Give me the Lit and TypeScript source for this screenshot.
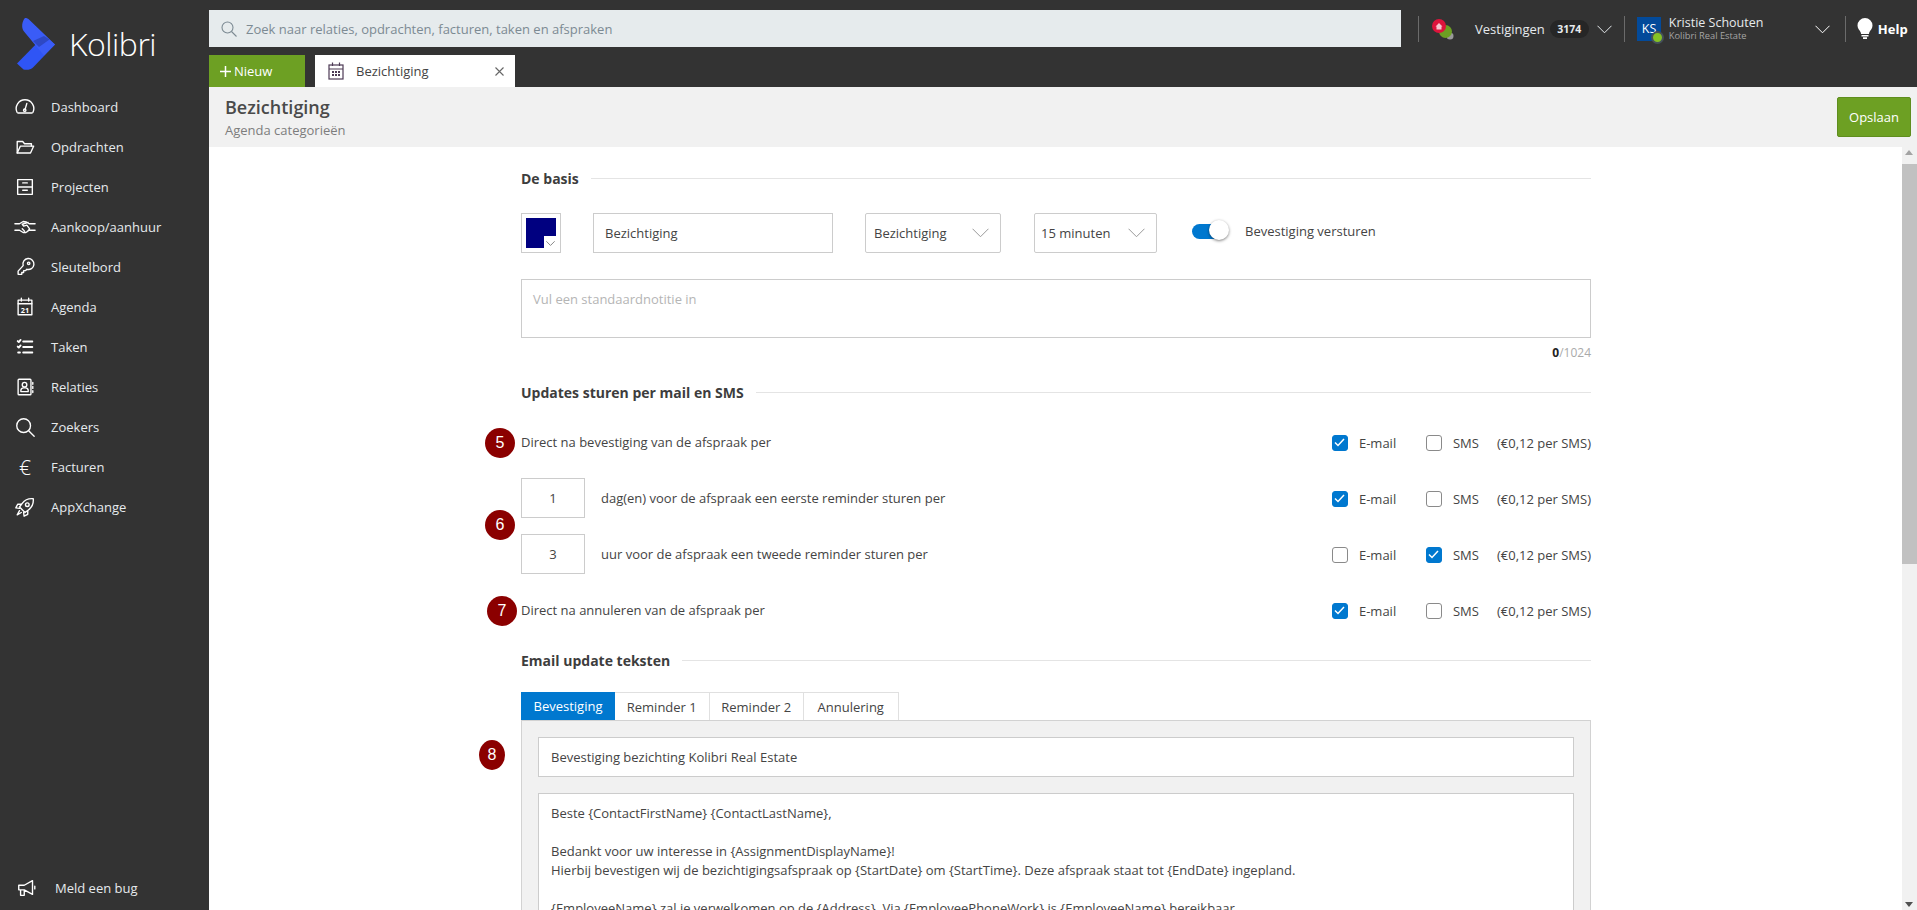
import { LitElement, html, css, svg } from 'lit'
import { customElement } from 'lit/decorators.js'

const ico = (body: unknown) => html`<svg class="ico" viewBox="0 0 24 24" fill="none" stroke="currentColor" stroke-width="1.5" stroke-linecap="round" stroke-linejoin="round">${body}</svg>`

const navItems = [
  { label: 'Dashboard', icon: svg`<path d="M4.5 18.5h15a1.5 1.5 0 0 0 1.2-.8A9.6 9.6 0 1 0 3.300 17.700a1.500 1.500 0 0 0 1.200.800z"/><path d="M12 15l2-7"/><circle cx="11.700" cy="15.500" r="1.300"/>` },
  { label: 'Opdrachten', icon: svg`<path d="M3.500 18.500V6h6l2 2.500h7.500v2.500"/><path d="M3.500 18.500l3.500-7.500h14.500l-3.500 7.500z"/>` },
  { label: 'Projecten', icon: svg`<rect x="4" y="4" width="16" height="16"/><path d="M4 12h16M9.500 7.500h5M9.500 15.500h5"/>` },
  { label: 'Aankoop/aanhuur', icon: svg`<path d="M1 8.500h5l4-2.500 3.500 .5 3 2h6.500M1 15.500h5l4 2.500h3l3.500-2.500h6.500M15.500 7l-6.500 2 1.500 2 3.500-1 3 4-2.500 3M9 14l2.500 2.500"/>` },
  { label: 'Sleutelbord', icon: svg`<path d="M10 10.500a6 6 0 1 1 4 4l-1.500 1.500h-2v2h-2v2h-4v-3.500z"/><circle cx="16" cy="8" r="1.300"/>` },
  { label: 'Agenda', icon: svg`<rect x="4.500" y="4.500" width="15" height="16"/><path d="M4.500 8.500h15M8 2.500v3M16 2.500v3"/><text x="12" y="18" text-anchor="middle" font-size="8" font-weight="700" fill="currentColor" stroke="none" font-family="Open Sans">21</text>` },
  { label: 'Taken', icon: svg`<path d="M4 5.500l1.200 1.200 2-2.500M4 11.500l1.200 1.200 2-2.500M10 6h10M10 12h10M10 18h10M4.500 18h2" stroke-width="2"/>` },
  { label: 'Relaties', icon: svg`<rect x="4.500" y="3.500" width="14" height="17" rx="1"/><circle cx="11.500" cy="9.500" r="2.500"/><path d="M7.500 17v-1.500a3 3 0 0 1 3-2.500h2a3 3 0 0 1 3 2.500v1.500zM20.500 7v2M20.500 11.500v2M20.500 16v2"/>` },
  { label: 'Zoekers', icon: svg`<circle cx="10.500" cy="10.500" r="7.500"/><path d="M16 16l6 6"/>` },
  { label: 'Facturen', glyph: '€' },
  { label: 'AppXchange', icon: svg`<path d="M21 3c-5-.5-9 1-12 5l-3 4 6 6 4-3c4-3 5.500-7 5-12z"/><circle cx="14.500" cy="9.500" r="2"/><path d="M8 9H4l-2 4 4 .5M15 16v4l-4 2-.5-4M6 16l-2.500 4.500L8 18"/>` },
]

const checkRows = [
  { email: true, sms: false },
  { email: true, sms: false },
  { email: false, sms: true },
  { email: true, sms: false },
]

const badges = [
  { n: 5, x: 485, y: 428, w: 30, h: 30 },
  { n: 6, x: 485, y: 510, w: 30, h: 30 },
  { n: 7, x: 487, y: 596, w: 30, h: 30 },
  { n: 8, x: 479, y: 740, w: 26, h: 30 },
]

const chevron = html`<svg class="chev" viewBox="0 0 16 9" fill="none" stroke="currentColor" stroke-width="1"><path vector-effect="non-scaling-stroke" d="M.5 .5L8 8 15.500 .5"/></svg>`

@customElement('app-root')
export class AppRoot extends LitElement {
  static styles = css`
    :host {
      display: block;
      height: 910px;
      overflow: hidden;
      font-family: "Open Sans", sans-serif;
      font-size: 13px;
      color: #444;
    }
    * { box-sizing: border-box; }
    .shell { display: flex; height: 910px; }

    .side {
      width: 209px;
      flex: none;
      background: #333;
      color: #e6eaed;
      display: flex;
      flex-direction: column;
    }
    .logo { display: flex; align-items: center; height: 87px; padding-left: 16px; gap: 0; }
    .logo svg { width: 41px; height: 52px; flex: none; margin-top: 1px; }
    .logo span { font-size: 32px; font-weight: 300; color: #fff; letter-spacing: -.5px; margin-left: 12px; line-height: 1; }
    .nav { display: flex; flex-direction: column; }
    .nav a { display: flex; align-items: center; height: 40px; padding-left: 12px; gap: 13px; }
    .nav a .ico, .bug .ico { color: #fff; }
    .ico { width: 22px; height: 22px; margin: 0 2px; flex: none; }
    .euro { width: 26px; text-align: center; font-size: 21px; font-weight: 300; color: #fff; line-height: 1; }
    .bug { margin-top: auto; display: flex; align-items: center; height: 40px; margin-bottom: 2px; padding-left: 14px; gap: 15px; }

    .main { flex: 1; min-width: 0; display: flex; flex-direction: column; }
    .top { background: #333; height: 87px; padding-top: 10px; flex: none; color: #e6eaed; }
    .row1 { display: flex; height: 37px; align-items: center; }
    .search {
      width: 1192px;
      height: 37px;
      background: #e6ebed;
      color: #7c8a93;
      display: flex;
      align-items: center;
      padding-left: 12px;
      gap: 9px;
    }
    .search svg { width: 16px; height: 16px; }
    .div { width: 1px; height: 26px; background: #6b6b6b; flex: none; }
    .row1 > .div:first-of-type { margin-left: 17px; }
    .branch { width: 24px; height: 22px; margin: 0 0 0 11px; flex: none; }
    .vest { margin-left: 21px; }
    .count {
      margin-left: 5px;
      background: #262626;
      border-radius: 9px;
      height: 18px;
      width: 39px;
      font-size: 10.500px;
      font-weight: 700;
      text-align: center;
      line-height: 18px;
      color: #e6eaed;
    }
    .chev { width: 15px; height: 9px; flex: none; }
    .row1 .c1 { margin: 0 12px 0 8px; }
    .avatar {
      position: relative;
      width: 24px;
      height: 24px;
      margin-left: 12px;
      background: #034a9a;
      color: #fff;
      font-size: 12.500px;
      line-height: 24px;
      padding-left: 5px;
      flex: none;
    }
    .dot {
      position: absolute;
      left: 14px;
      top: 14px;
      width: 13px;
      height: 13px;
      border-radius: 50%;
      background: #85c225;
      border: 2px solid #45525a;
    }
    .user { margin-left: 8px; width: 146px; display: flex; flex-direction: column; }
    .user b { font-weight: 400; font-size: 12.500px; line-height: 15px; }
    .user small { font-size: 9.300px; line-height: 12px; color: #a5a5a5; }
    .row1 .c2 { margin-right: 15px; color: #fff; }
    .bulb { width: 16px; height: 21px; margin-left: 11px; flex: none; }
    .help { color: #fff; font-weight: 700; margin-left: 5px; }

    .row2 { display: flex; margin-top: 8px; height: 32px; }
    .new {
      width: 96px;
      background: #6da023;
      color: #fff;
      font-weight: 500;
      display: flex;
      align-items: center;
      padding-left: 11px;
      gap: 3px;
    }
    .new svg { width: 11px; height: 11px; }
    .tab {
      width: 200px;
      margin-left: 10px;
      background: #fff;
      color: #444;
      display: flex;
      align-items: center;
      padding-left: 13px;
      gap: 12px;
    }
    .tab .ico { width: 16px; height: 18px; margin: 0; color: #4d3a55; }
    .tab .x { margin-left: auto; margin-right: 11px; width: 9px; height: 9px; color: #666; }

    .head {
      height: 60px;
      flex: none;
      background: #f1f1f1;
      display: flex;
      justify-content: space-between;
      align-items: center;
      padding: 0 6px 0 16px;
    }
    .head h1 { margin: 0; font-size: 18px; font-weight: 600; line-height: 24px; color: #4a4a4a; }
    .head p { margin: 2px 0 0; color: #7d7d7d; line-height: 18px; }
    .save {
      width: 74px;
      height: 40px;
      background: #6da023;
      border: 1px solid #5f8e1e;
      border-radius: 2px;
      color: #fff;
      display: flex;
      align-items: center;
      justify-content: center;
    }

    .body { flex: 1; min-height: 0; display: flex; background: #fff; }
    .scroll { flex: 1; min-width: 0; overflow: hidden; padding-left: 312px; }
    .form { position: relative; width: 1070px; padding-top: 21px; }
    .badge {
      position: absolute;
      background: #8b0000;
      color: #fff;
      border-radius: 50%;
      font-family: "Liberation Sans", sans-serif;
      font-size: 16px;
      display: flex;
      align-items: center;
      justify-content: center;
    }

    .sect { display: flex; align-items: center; height: 20px; gap: 12px; font-size: 14px; font-weight: 700; color: #3d3d3d; }
    .sect::after { content: ""; flex: 1; height: 1px; background: #e4e4e4; }
    .basis { display: flex; height: 40px; margin-top: 25px; align-items: stretch; }
    .field { border: 1px solid #ccc; background: #fff; display: flex; align-items: center; color: #444; }
    .swatch { width: 40px; position: relative; display: block; padding: 4px; }
    .swatch i {
      display: block;
      width: 30px;
      height: 30px;
      background: #000080;
      clip-path: polygon(0 0, 100% 0, 100% 60%, 60% 60%, 60% 100%, 0 100%);
    }
    .swatch .chev { position: absolute; right: 5px; bottom: 6px; width: 9px; height: 5px; color: #888; }
    .name { width: 240px; margin-left: 32px; padding-left: 11px; }
    .select { border-radius: 2px; justify-content: space-between; padding: 0 11px 0 8px; }
    .select .chev { color: #999; width: 17px; height: 10px; }
    .s1 { width: 136px; margin-left: 32px; }
    .s2 { width: 123px; margin-left: 33px; padding-left: 6px; }
    .toggle { position: relative; width: 37px; height: 21px; margin: 7px 0 0 35px; }
    .toggle::before {
      content: "";
      position: absolute;
      left: 0;
      top: 4px;
      width: 32px;
      height: 15px;
      border-radius: 8px;
      background: #0078cf;
    }
    .toggle::after {
      content: "";
      position: absolute;
      right: 0;
      top: 0;
      width: 20px;
      height: 20px;
      border-radius: 50%;
      background: #fff;
      box-shadow: 0 1px 3px rgba(0, 0, 0, .5);
    }
    .toglabel { margin: 8px 0 0 16px; line-height: 20px; }
    .note { height: 59px; margin-top: 26px; align-items: flex-start; padding: 10px 11px; color: #b5b5b5; line-height: 18px; }
    .counter { margin-top: 7px; height: 16px; text-align: right; font-size: 12px; line-height: 16px; color: #aaa; }
    .counter b { color: #222; }
    .mt-h2 { margin-top: 21px; }

    .rows { margin-top: 20px; display: flex; flex-direction: column; gap: 16px; }
    .line { display: flex; align-items: center; height: 40px; }
    .num { width: 64px; height: 40px; justify-content: center; margin-right: 16px; }
    .opts { margin-left: auto; display: flex; align-items: center; padding-top: 1px; }
    .box {
      width: 16px;
      height: 16px;
      border: 1px solid #8a8a8a;
      border-radius: 3px;
      background: #fff;
      flex: none;
      display: flex;
      align-items: center;
      justify-content: center;
    }
    .box.on { background: #0078cf; border-color: #0078cf; }
    .box svg { width: 11px; height: 9px; }
    .lab-e { width: 67px; margin-left: 11px; }
    .lab-s { width: 44px; margin-left: 11px; }
    .mt-h3 { margin-top: 20px; }

    .tabs { display: flex; margin-top: 22px; height: 28px; }
    .tabs div {
      height: 28px;
      border: 1px solid #e0e0e0;
      border-bottom: none;
      border-left: none;
      display: flex;
      align-items: center;
      justify-content: center;
      width: 94.500px;
    }
    .tabs div:first-child { width: 94px; background: #0078cf; color: #fff; border: none; }
    .panel {
      border: 1px solid #d2d2d2;
      background: #f1f1f1;
      padding: 16px 16px 0;
      height: 400px;
    }
    .subject { height: 40px; padding-left: 12px; }
    .mail {
      display: block;
      margin-top: 16px;
      height: 300px;
      padding: 10px 12px;
      line-height: 19px;
    }
    .mail p { margin: 0; min-height: 19px; white-space: nowrap; }

    .bar { width: 15px; flex: none; background: #f1f1f1; position: relative; display: flex; flex-direction: column; align-items: center; }
    .thumb { width: 15px; background: #c1c1c1; height: 400px; margin-top: 17px; }
    .arrow { position: absolute; left: 3px; width: 0; height: 0; border: 4px solid transparent; }
    .up { top: 3px; border-top: 0; border-bottom: 5px solid #a3a3a3; }
    .down { bottom: 3px; border-bottom: 0; border-top: 5px solid #505050; }
  `

  check(on: boolean) {
    return html`<span class="box ${on ? 'on' : ''}">${on
      ? html`<svg viewBox="0 0 11 9" fill="none" stroke="#fff" stroke-width="1.5"><path d="M1 4.500l3 3 6-6.500"/></svg>`
      : ''}</span>`
  }

  opts(row: { email: boolean; sms: boolean }) {
    return html`<div class="opts">
      ${this.check(row.email)}<span class="lab-e">E-mail</span>
      ${this.check(row.sms)}<span class="lab-s">SMS</span>
      <span>(€0,12 per SMS)</span>
    </div>`
  }

  renderSide() {
    return html`<aside class="side">
      <div class="logo">
        <svg viewBox="0 0 41 52">
          <path fill="#2f55f5" d="M1 45.500L28 18l11 8.500-21.500 22.500c-3.500 3.500-7.500 3-10 2.500z"/>
          <path fill="#3a5cf7" d="M9 0c2 0 3 .500 4.500 2L39 26.500 28 37.500 8 13.500C5 10 6 3 9 0z"/>
          <path fill="#2e48c4" d="M17 23l11-5 5.500 3.500L23 29z"/>
        </svg>
        <span>Kolibri</span>
      </div>
      <nav class="nav">
        ${navItems.map(n => html`<a>${n.glyph ? html`<span class="euro">${n.glyph}</span>` : ico(n.icon)}<span>${n.label}</span></a>`)}
      </nav>
      <div class="bug">
        ${ico(svg`<path d="M3 9h6l9-5v15l-9-5H3zM18 4v15M5 14v6h4v-6M9 14v5M20.500 10v3"/>`)}
        <span>Meld een bug</span>
      </div>
    </aside>`
  }

  renderTop() {
    return html`<div class="top">
      <div class="row1">
        <div class="search">
          <svg viewBox="0 0 16 16" fill="none" stroke="currentColor" stroke-width="1.100"><circle cx="6.500" cy="6.500" r="5.500"/><path d="M10.500 10.500l5 5"/></svg>
          <span>Zoek naar relaties, opdrachten, facturen, taken en afspraken</span>
        </div>
        <span class="div"></span>
        <svg class="branch" viewBox="0 0 24 22">
          <circle cx="20" cy="18" r="3.500" fill="#999"/>
          <circle cx="15.500" cy="13.500" r="6.500" fill="#6da023"/>
          <circle cx="9" cy="8" r="7" fill="#dc143c"/>
          <path d="M5.500 8.500L9 5l3.500 3.500h-1v3h-5v-3z" fill="#f6c4cf"/>
        </svg>
        <span class="vest">Vestigingen</span>
        <span class="count">3174</span>
        <span class="c1">${chevron}</span>
        <span class="div"></span>
        <div class="avatar">KS<span class="dot"></span></div>
        <div class="user"><b>Kristie Schouten</b><small>Kolibri Real Estate</small></div>
        <span class="c2">${chevron}</span>
        <span class="div"></span>
        <svg class="bulb" viewBox="0 0 16 21">
          <path fill="#fff" d="M8 0a7.500 7.500 0 0 0-7.500 7.500c0 3 2 4.500 3 6.500.4.800.5 1.500.5 2h8c0-.5.100-1.200.5-2 1-2 3-3.500 3-6.500A7.500 7.500 0 0 0 8 0z"/>
          <path fill="#fff" d="M4.500 17h7v1.500h-7zM6 19.300h4V21H6z"/>
        </svg>
        <span class="help">Help</span>
      </div>
      <div class="row2">
        <div class="new">
          <svg viewBox="0 0 11 11" fill="none" stroke="#fff" stroke-width="1.500"><path d="M5.500 0v11M0 5.500h11"/></svg>
          <span>Nieuw</span>
        </div>
        <div class="tab">
          <svg class="ico" viewBox="0 0 16 18" fill="none" stroke="currentColor" stroke-width="1.200">
            <rect x="1" y="3" width="14" height="14"/><path d="M1 7h14M4.500 .5v3.500M11.500 .5v3.500"/>
            <path d="M4 10h2M7 10h2M10 10h2M4 13h2M7 13h2M10 13h2" stroke-width="1.800"/>
          </svg>
          <span>Bezichtiging</span>
          <svg class="x" viewBox="0 0 9 9" fill="none" stroke="currentColor" stroke-width="1.100"><path d="M.5 .5l8 8M8.500 .5l-8 8"/></svg>
        </div>
      </div>
    </div>`
  }

  renderForm() {
    return html`<div class="form">
      ${badges.map(b => html`<div class="badge" style="left:${b.x - 521}px;top:${b.y - 147}px;width:${b.w}px;height:${b.h}px">${b.n}</div>`)}

      <div class="sect">De basis</div>
      <div class="basis">
        <div class="field swatch"><i></i>${chevron}</div>
        <div class="field name">Bezichtiging</div>
        <div class="field select s1"><span>Bezichtiging</span>${chevron}</div>
        <div class="field select s2"><span>15 minuten</span>${chevron}</div>
        <div class="toggle"></div>
        <div class="toglabel">Bevestiging versturen</div>
      </div>
      <div class="field note">Vul een standaardnotitie in</div>
      <div class="counter"><b>0</b>/1024</div>

      <div class="sect mt-h2">Updates sturen per mail en SMS</div>
      <div class="rows">
        <div class="line"><span>Direct na bevestiging van de afspraak per</span>${this.opts(checkRows[0])}</div>
        <div class="line"><div class="field num">1</div><span>dag(en) voor de afspraak een eerste reminder sturen per</span>${this.opts(checkRows[1])}</div>
        <div class="line"><div class="field num">3</div><span>uur voor de afspraak een tweede reminder sturen per</span>${this.opts(checkRows[2])}</div>
        <div class="line"><span>Direct na annuleren van de afspraak per</span>${this.opts(checkRows[3])}</div>
      </div>

      <div class="sect mt-h3">Email update teksten</div>
      <div class="tabs">
        <div>Bevestiging</div><div>Reminder 1</div><div>Reminder 2</div><div>Annulering</div>
      </div>
      <div class="panel">
        <div class="field subject">Bevestiging bezichting Kolibri Real Estate</div>
        <div class="field mail">
          <p>Beste {ContactFirstName} {ContactLastName},</p>
          <p></p>
          <p>Bedankt voor uw interesse in {AssignmentDisplayName}!</p>
          <p>Hierbij bevestigen wij de bezichtigingsafspraak op {StartDate} om {StartTime}. Deze afspraak staat tot {EndDate} ingepland.</p>
          <p></p>
          <p>{EmployeeName} zal je verwelkomen op de {Address}. Via {EmployeePhoneWork} is {EmployeeName} bereikbaar.</p>
        </div>
      </div>
    </div>`
  }

  render() {
    return html`<div class="shell">
      ${this.renderSide()}
      <div class="main">
        ${this.renderTop()}
        <header class="head">
          <div><h1>Bezichtiging</h1><p>Agenda categorieën</p></div>
          <div class="save">Opslaan</div>
        </header>
        <div class="body">
          <div class="scroll">${this.renderForm()}</div>
          <div class="bar"><i class="arrow up"></i><div class="thumb"></div><i class="arrow down"></i></div>
        </div>
      </div>
    </div>`
  }
}
